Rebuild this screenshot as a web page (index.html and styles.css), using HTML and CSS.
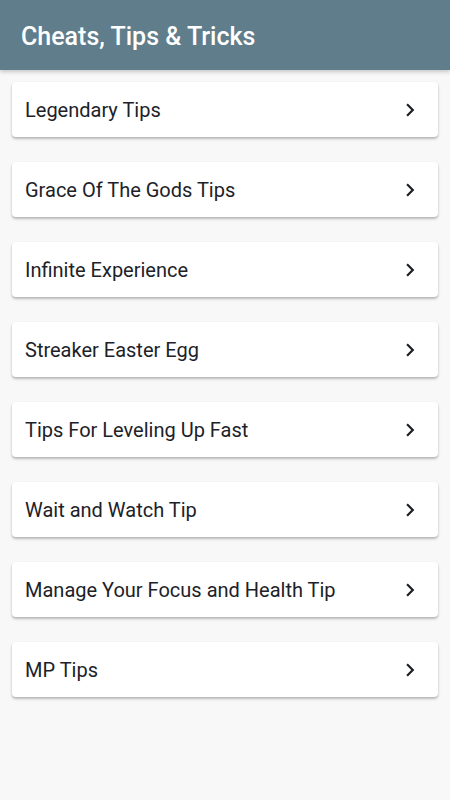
FILE: index.html
```html
<!DOCTYPE html>
<html lang="en">
<head>
    <meta charset="UTF-8">
    <meta name="viewport" content="width=device-width, initial-scale=1.0">
    <title>Cheats, Tips &amp; Tricks</title>
    <link rel="stylesheet" href="styles.css">
</head>
<body>
    <header class="toolbar">
        <h1 class="toolbar-title">Cheats, Tips &amp; Tricks</h1>
    </header>

    <main class="tip-list">
        <a class="tip-card" href="#">
            <span class="tip-name">Legendary Tips</span>
            <svg class="chevron" viewBox="0 0 24 24"><path d="M10 6L8.59 7.41 13.17 12l-4.58 4.59L10 18l6-6z"/></svg>
        </a>
        <a class="tip-card" href="#">
            <span class="tip-name">Grace Of The Gods Tips</span>
            <svg class="chevron" viewBox="0 0 24 24"><path d="M10 6L8.59 7.41 13.17 12l-4.58 4.59L10 18l6-6z"/></svg>
        </a>
        <a class="tip-card" href="#">
            <span class="tip-name">Infinite Experience</span>
            <svg class="chevron" viewBox="0 0 24 24"><path d="M10 6L8.59 7.41 13.17 12l-4.58 4.59L10 18l6-6z"/></svg>
        </a>
        <a class="tip-card" href="#">
            <span class="tip-name">Streaker Easter Egg</span>
            <svg class="chevron" viewBox="0 0 24 24"><path d="M10 6L8.59 7.41 13.17 12l-4.58 4.59L10 18l6-6z"/></svg>
        </a>
        <a class="tip-card" href="#">
            <span class="tip-name">Tips For Leveling Up Fast</span>
            <svg class="chevron" viewBox="0 0 24 24"><path d="M10 6L8.59 7.41 13.17 12l-4.58 4.59L10 18l6-6z"/></svg>
        </a>
        <a class="tip-card" href="#">
            <span class="tip-name">Wait and Watch Tip</span>
            <svg class="chevron" viewBox="0 0 24 24"><path d="M10 6L8.59 7.41 13.17 12l-4.58 4.59L10 18l6-6z"/></svg>
        </a>
        <a class="tip-card" href="#">
            <span class="tip-name">Manage Your Focus and Health Tip</span>
            <svg class="chevron" viewBox="0 0 24 24"><path d="M10 6L8.59 7.41 13.17 12l-4.58 4.59L10 18l6-6z"/></svg>
        </a>
        <a class="tip-card" href="#">
            <span class="tip-name">MP Tips</span>
            <svg class="chevron" viewBox="0 0 24 24"><path d="M10 6L8.59 7.41 13.17 12l-4.58 4.59L10 18l6-6z"/></svg>
        </a>
    </main>
</body>
</html>
```

FILE: styles.css
```css
/* Base */
body {
    margin: 0;
    background-color: #f8f8f8;
    font-family: Roboto, "Noto Sans", Arial, sans-serif;
    color: #1c2228;
}

/* Barra superior */
.toolbar {
    height: 70px;
    background-color: #607d8b;
    display: flex;
    align-items: center;
    padding: 2px 21px 0;
    box-sizing: border-box;
    box-shadow: 0 2px 4px rgba(0, 0, 0, 0.2);
}

.toolbar-title {
    margin: 0;
    color: #ffffff;
    font-size: 25px;
    font-weight: 500;
}

/* Lista de tips */
.tip-list {
    display: flex;
    flex-direction: column;
    gap: 25px;
    padding: 12px 12px;
}

.tip-card {
    display: flex;
    align-items: center;
    justify-content: space-between;
    height: 55px;
    padding: 1px 15px 0 13px;
    box-sizing: border-box;
    background-color: #ffffff;
    border-radius: 4px;
    box-shadow: 0 2px 3px rgba(0, 0, 0, 0.22), 0 1px 2px rgba(0, 0, 0, 0.1);
    text-decoration: none;
    color: #1c2228;
}

.tip-name {
    font-size: 20px;
}

.chevron {
    width: 26px;
    height: 26px;
    fill: #1b1f24;
}
```
